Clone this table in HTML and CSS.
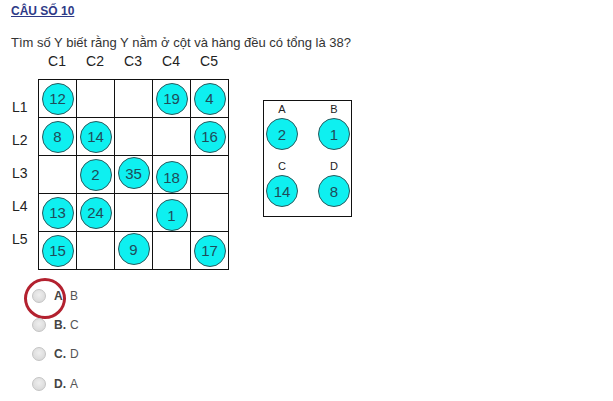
FILE: index.html
```html
<!DOCTYPE html>
<html lang="vi">
<head>
<meta charset="utf-8">
<title>Câu số 10</title>
<link rel="stylesheet" href="styles.css">
</head>
<body>
<div class="page">
  <h2 class="title"><a href="#">CÂU SỐ 10</a></h2>
  <p class="question">Tìm số Y biết rằng Y nằm ở cột và hàng đều có tổng là 38?</p>

  <div class="figure">
    <div class="board">
      <div class="corner"></div>
      <div class="col-labels">
        <span>C1</span><span>C2</span><span>C3</span><span>C4</span><span>C5</span>
      </div>
      <div class="row-labels">
        <span>L1</span><span>L2</span><span>L3</span><span>L4</span><span>L5</span>
      </div>
      <div class="grid">
        <div class="cell"><span class="ball">12</span></div>
        <div class="cell"></div>
        <div class="cell"></div>
        <div class="cell"><span class="ball">19</span></div>
        <div class="cell"><span class="ball">4</span></div>

        <div class="cell"><span class="ball">8</span></div>
        <div class="cell"><span class="ball">14</span></div>
        <div class="cell"></div>
        <div class="cell"></div>
        <div class="cell"><span class="ball">16</span></div>

        <div class="cell"></div>
        <div class="cell"><span class="ball">2</span></div>
        <div class="cell"><span class="ball up">35</span></div>
        <div class="cell"><span class="ball down">18</span></div>
        <div class="cell"></div>

        <div class="cell"><span class="ball">13</span></div>
        <div class="cell"><span class="ball">24</span></div>
        <div class="cell"></div>
        <div class="cell"><span class="ball down">1</span></div>
        <div class="cell"></div>

        <div class="cell"><span class="ball">15</span></div>
        <div class="cell"></div>
        <div class="cell"><span class="ball up">9</span></div>
        <div class="cell"></div>
        <div class="cell"><span class="ball">17</span></div>
      </div>
    </div>

    <div class="choices-box">
      <div class="choice"><span class="choice-label">A</span><span class="ball">2</span></div>
      <div class="choice"><span class="choice-label">B</span><span class="ball">1</span></div>
      <div class="choice"><span class="choice-label">C</span><span class="ball">14</span></div>
      <div class="choice"><span class="choice-label">D</span><span class="ball">8</span></div>
    </div>
  </div>

  <ul class="options">
    <li class="option">
      <span class="radio"></span><span class="opt-key">A.</span><span class="opt-val">B</span>
      <span class="mark"></span>
    </li>
    <li class="option"><span class="radio"></span><span class="opt-key">B.</span><span class="opt-val">C</span></li>
    <li class="option"><span class="radio"></span><span class="opt-key">C.</span><span class="opt-val">D</span></li>
    <li class="option"><span class="radio"></span><span class="opt-key">D.</span><span class="opt-val">A</span></li>
  </ul>
</div>
</body>
</html>
```

FILE: styles.css
```css
* { box-sizing: border-box; }

html, body {
  margin: 0;
  padding: 0;
  background: #ffffff;
}

body {
  font-family: "Liberation Sans", Arial, sans-serif;
  color: #333333;
}

.page {
  padding: 4px 0 0 11px;
}

.title {
  margin: 0;
  font-size: 12px;
  line-height: 14px;
  font-weight: bold;
}

.title a {
  color: #2e3a87;
  text-decoration: underline;
}

.question {
  margin: 17px 0 0 0;
  font-size: 13px;
  line-height: 15px;
  color: #333333;
}

.figure {
  display: flex;
  align-items: flex-start;
  margin-top: 3px;
}

.board {
  display: grid;
  grid-template-columns: 27px 191px;
  grid-template-rows: 26px auto;
}

.col-labels {
  display: grid;
  grid-template-columns: repeat(5, 38px);
  font-size: 14px;
  line-height: 16px;
  color: #222222;
}

.col-labels span {
  text-align: center;
}

.row-labels {
  display: flex;
  flex-direction: column;
  padding: 12px 0 0 1px;
  font-size: 14px;
  line-height: 33px;
  color: #222222;
}

.grid {
  display: grid;
  grid-template-columns: repeat(5, 38px);
  grid-template-rows: repeat(5, 38px);
  border-top: 1px solid #111111;
  border-left: 1px solid #111111;
  width: 191px;
}

.cell {
  border-right: 1px solid #111111;
  border-bottom: 1px solid #111111;
  display: flex;
  align-items: center;
  justify-content: center;
}

.ball {
  width: 32px;
  height: 32px;
  border-radius: 50%;
  background: #0ef0f0;
  border: 1px solid #2a5a5e;
  display: flex;
  align-items: center;
  justify-content: center;
  font-size: 15px;
  color: #1f4c5a;
  line-height: 1;
}

.ball.down { margin-top: 5px; }
.ball.up { margin-top: -3px; }

.choices-box {
  margin: 47px 0 0 34px;
  width: 89px;
  border: 1px solid #111111;
  padding: 2px 1px 9px 2px;
  display: grid;
  grid-template-columns: 32px 32px;
  column-gap: 20px;
  row-gap: 10px;
}

.choice {
  display: flex;
  flex-direction: column;
  align-items: center;
}

.choice-label {
  font-size: 11px;
  line-height: 13px;
  color: #222222;
  margin-bottom: 2px;
}

.options {
  list-style: none;
  margin: 11px 0 0 0;
  padding: 0 0 0 21px;
}

.option {
  position: relative;
  display: flex;
  align-items: center;
  height: 29.3px;
  font-size: 12px;
}

.radio {
  width: 14px;
  height: 14px;
  border-radius: 50%;
  border: 1px solid #c4c4c4;
  background: radial-gradient(circle at 50% 40%, #eeeeee 0%, #dcdcdc 70%, #d0d0d0 100%);
  margin-right: 8px;
}

.opt-key {
  font-weight: bold;
  color: #444444;
  margin-right: 4px;
}

.opt-val {
  color: #555555;
}

.mark {
  position: absolute;
  left: -8px;
  top: -3px;
  width: 42px;
  height: 41px;
  border: 3px solid #b3212f;
  border-radius: 50%;
}
```
